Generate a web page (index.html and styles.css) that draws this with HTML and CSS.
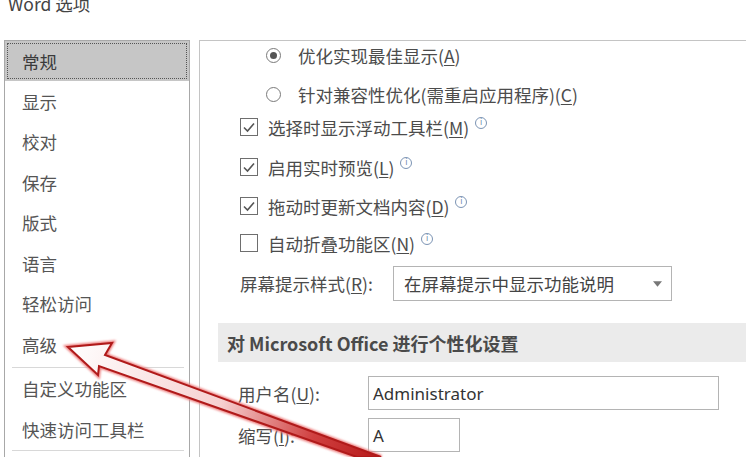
FILE: index.html
```html
<!DOCTYPE html>
<html lang="zh-CN">
<head>
<meta charset="utf-8">
<link rel="stylesheet" href="styles.css">
</head>
<body>
<div class="title">Word 选项</div>
<div class="main">
  <nav class="nav">
    <div class="nav-item selected">常规</div>
    <div class="nav-item">显示</div>
    <div class="nav-item">校对</div>
    <div class="nav-item">保存</div>
    <div class="nav-item">版式</div>
    <div class="nav-item">语言</div>
    <div class="nav-item">轻松访问</div>
    <div class="nav-item">高级</div>
    <div class="nav-sep"></div>
    <div class="nav-item">自定义功能区</div>
    <div class="nav-item">快速访问工具栏</div>
    <div class="nav-sep last"></div>
  </nav>
  <section class="panel">
    <div class="row radio-row r1"><span class="radio on"></span><span class="label">优化实现最佳显示(<u>A</u>)</span></div>
    <div class="row radio-row r2"><span class="radio"></span><span class="label">针对兼容性优化(需重启应用程序)(<u>C</u>)</span></div>
    <div class="row check-row r3"><span class="check on"><svg viewBox="0 0 16 16"><path d="M3 8.5 L6.5 12 L13 4.5" fill="none" stroke="#555" stroke-width="1.6"/></svg></span><span class="label">选择时显示浮动工具栏(<u>M</u>)</span><span class="info">i</span></div>
    <div class="row check-row r4"><span class="check on"><svg viewBox="0 0 16 16"><path d="M3 8.5 L6.5 12 L13 4.5" fill="none" stroke="#555" stroke-width="1.6"/></svg></span><span class="label">启用实时预览(<u>L</u>)</span><span class="info">i</span></div>
    <div class="row check-row r5"><span class="check on"><svg viewBox="0 0 16 16"><path d="M3 8.5 L6.5 12 L13 4.5" fill="none" stroke="#555" stroke-width="1.6"/></svg></span><span class="label">拖动时更新文档内容(<u>D</u>)</span><span class="info">i</span></div>
    <div class="row check-row r6"><span class="check"></span><span class="label">自动折叠功能区(<u>N</u>)</span><span class="info">i</span></div>
    <div class="row combo-row r7"><span class="label field-label">屏幕提示样式(<u>R</u>):</span><div class="combo"><span>在屏幕提示中显示功能说明</span><svg class="caret" viewBox="0 0 10 6"><path d="M0 0 H10 L5 6 Z" fill="#777"/></svg></div></div>
    <div class="section-head">对 Microsoft Office 进行个性化设置</div>
    <div class="row field-row r8"><span class="label user-label">用户名(<u>U</u>):</span><div class="input wide">Administrator</div></div>
    <div class="row field-row r9"><span class="label user-label">缩写(<u>I</u>):</span><div class="input narrow">A</div></div>
  </section>
</div>
<svg class="arrow" viewBox="0 0 746 457" width="746" height="457">
  <defs>
    <linearGradient id="ag" x1="68" y1="348" x2="375" y2="457" gradientUnits="userSpaceOnUse">
      <stop offset="0" stop-color="#ffffff"/>
      <stop offset="0.5" stop-color="#f6d0d0"/>
      <stop offset="0.8" stop-color="#d04040"/>
      <stop offset="1" stop-color="#b81c1c"/>
    </linearGradient>
    <filter id="glow" x="-10%" y="-10%" width="120%" height="120%">
      <feGaussianBlur stdDeviation="1.3"/>
    </filter>
  </defs>
  <polygon points="68,347 112,343 105,355 381,457 357,457 99,366 98,375" fill="none" stroke="#ec7a7a" stroke-width="4.5" filter="url(#glow)" stroke-linejoin="miter"/>
  <polygon points="68,347 112,343 105,355 381,457 357,457 99,366 98,375" fill="url(#ag)" stroke="#b01a1a" stroke-width="2" stroke-linejoin="miter"/>
</svg>
</body>
</html>
```
FILE: styles.css
```css
* { box-sizing: border-box; }
html, body { margin: 0; padding: 0; }
body {
  width: 746px;
  height: 457px;
  overflow: hidden;
  background: #fff;
  font-family: "Noto Sans CJK SC", "Noto Sans", sans-serif;
  color: #4a4a4a;
  position: relative;
}
u { text-decoration: underline; text-underline-offset: 2px; }

.title {
  height: 46px;
  padding-left: 8px;
  font-size: 17.5px;
  line-height: 20px;
  margin-top: -6px;
  color: #444;
}

.main {
  display: flex;
  padding-left: 4px;
  gap: 9px;
  align-items: flex-start;
}

.nav {
  width: 186px;
  flex: none;
  border: 1px solid #a8a8a8;
  border-bottom: none;
  height: 430px;
}
.nav-item {
  height: 40.5px;
  display: flex;
  align-items: center;
  padding-left: 17px;
  font-size: 17.5px;
  color: #555;
}
.nav-item.selected {
  background: #c6c6c6;
  outline: 1px dotted #555;
  outline-offset: -3px;
  color: #3a3a3a;
  height: 40px;
}
.nav-sep {
  height: 1px;
  background: #d8d8d8;
  margin: 2px 5px 1px 7px;
}
.nav-sep.last { margin-top: 0; }

.panel {
  flex: 1;
  height: 430px;
  border-left: 1px solid #c4c4c4;
  border-top: 1px solid #c4c4c4;
  display: flex;
  flex-direction: column;
}

.row {
  display: flex;
  align-items: center;
  height: 24px;
  font-size: 17.5px;
  color: #4c4c4c;
  white-space: nowrap;
}
.radio-row { padding-left: 66px; }
.check-row { padding-left: 40px; }
.combo-row { padding-left: 40px; height: 35px; }
.field-row { padding-left: 38px; height: 34px; }

.r1 { margin-top: 2px; }
.r2 { margin-top: 15px; }
.r3 { margin-top: 9px; }
.r4 { margin-top: 16px; }
.r5 { margin-top: 15px; }
.r6 { margin-top: 13px; }
.r7 { margin-top: 11px; }
.r8 { margin-top: 14px; }
.r9 { margin-top: 8px; }

.radio {
  width: 15px;
  height: 15px;
  border: 1px solid #7a7a7a;
  border-radius: 50%;
  margin-right: 17px;
  display: flex;
  align-items: center;
  justify-content: center;
  flex: none;
}
.radio.on::after {
  content: "";
  width: 7px;
  height: 7px;
  border-radius: 50%;
  background: #555;
}

.check {
  width: 18px;
  height: 18px;
  border: 1px solid #6e6e6e;
  margin-right: 10px;
  flex: none;
  display: flex;
}
.check svg { width: 16px; height: 16px; }

.info {
  width: 12px;
  height: 12px;
  border: 1px solid #7c94b4;
  border-radius: 50%;
  font-size: 8px;
  line-height: 10px;
  text-align: center;
  color: #6a86aa;
  margin-left: 6px;
  margin-top: -9px;
  font-family: "DejaVu Sans", sans-serif;
  flex: none;
}

.field-label { width: 153px; }
.combo {
  width: 279px;
  height: 35px;
  border: 1px solid #b4b4b4;
  display: flex;
  align-items: center;
  padding-left: 10px;
  justify-content: space-between;
  padding-right: 9px;
  color: #444;
}
.caret { width: 9px; height: 6px; }

.section-head {
  margin-top: 22px;
  margin-left: 18px;
  height: 39px;
  background: #ebebeb;
  display: flex;
  align-items: center;
  padding-left: 9px;
  font-size: 18px;
  font-weight: bold;
  color: #4a4a4a;
}

.user-label { width: 130px; }
.input {
  height: 34px;
  border: 1px solid #b4b4b4;
  display: flex;
  align-items: center;
  padding-left: 4px;
  font-family: "Noto Sans", sans-serif;
  font-size: 17px;
  color: #333;
}
.input.wide { width: 351px; }
.input.narrow { width: 92px; }

.arrow {
  position: absolute;
  left: 0;
  top: 0;
  pointer-events: none;
}
```
